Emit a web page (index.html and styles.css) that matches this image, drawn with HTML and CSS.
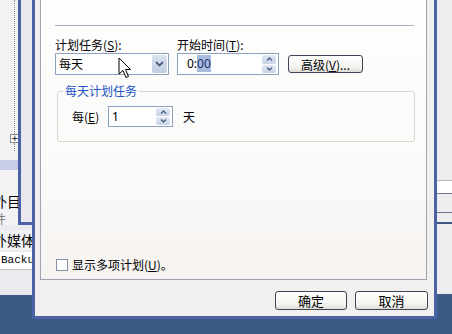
FILE: index.html
```html
<!DOCTYPE html>
<html lang="zh-CN">
<head>
  <meta charset="UTF-8" />
  <title>计划任务</title>
  <link rel="stylesheet" href="styles.css">
</head>
<body>
  <div class="desk">
    <div class="bg-left">
      <div class="bg-top">
        <div class="tree">
          <div class="tree-line"></div>
          <div class="tree-plus">+</div>
          <div class="tree-line stub"></div>
          <div class="tree-sel"></div>
          <div class="tree-item">外目</div>
          <div class="tree-item dim">件</div>
        </div>
        <div class="bg-win"></div>
      </div>
      <div class="bg-row">外媒体项</div>
      <div class="bg-row mono">Backup</div>
    </div>

    <div class="dialog">
      <div class="page">
        <div class="sep"></div>
        <div class="fields">
          <div class="field task">
            <label>计划任务(<u>S</u>):</label>
            <div class="combo">
              <span class="combo-text">每天</span>
              <span class="combo-btn">
                <svg width="9" height="6" viewBox="0 0 9 6"><path d="M1 1 L4.5 4.5 L8 1" fill="none" stroke="#4a5f86" stroke-width="1.8"/></svg>
              </span>
            </div>
          </div>
          <div class="field time">
            <label>开始时间(<u>T</u>):</label>
            <div class="spin">
              <span class="spin-text">0:<span class="sel">00</span></span>
              <span class="spin-btns">
                <span><svg width="7" height="4" viewBox="0 0 7 4"><path d="M1 3.5 L3.5 1 L6 3.5" fill="none" stroke="#4a5f86" stroke-width="1.4"/></svg></span>
                <span><svg width="7" height="4" viewBox="0 0 7 4"><path d="M1 0.5 L3.5 3 L6 0.5" fill="none" stroke="#4a5f86" stroke-width="1.4"/></svg></span>
              </span>
            </div>
          </div>
          <button class="btn adv">高级(<u>V</u>)...</button>
        </div>

        <fieldset class="group">
          <legend>每天计划任务</legend>
          <div class="every">
            <span class="every-label">每(<u>E</u>)</span>
            <div class="spin small">
              <span class="spin-text">1</span>
              <span class="spin-btns">
                <span><svg width="7" height="4" viewBox="0 0 7 4"><path d="M1 3.5 L3.5 1 L6 3.5" fill="none" stroke="#4a5f86" stroke-width="1.4"/></svg></span>
                <span><svg width="7" height="4" viewBox="0 0 7 4"><path d="M1 0.5 L3.5 3 L6 0.5" fill="none" stroke="#4a5f86" stroke-width="1.4"/></svg></span>
              </span>
            </div>
            <span class="unit">天</span>
          </div>
        </fieldset>

        <label class="check"><span class="box"></span>显示多项计划(<u>U</u>)。</label>
      </div>
      <div class="actions">
        <button class="btn ok">确定</button>
        <button class="btn cancel">取消</button>
      </div>
    </div>

    <div class="bg-right">
      <div class="r-top"></div>
      <div class="r-row"></div>
      <div class="r-mid"></div>
      <div class="r-row2"></div>
      <div class="r-rest"></div>
    </div>
  </div>

  <!-- mouse pointer over the combo -->
  <svg class="cursor" width="15" height="23" viewBox="0 0 15 23">
    <path d="M1 1 L1 17 L5 13.5 L8 20.5 L10.5 19.5 L7.5 12.5 L12.5 12.5 Z" fill="#fff" stroke="#000" stroke-width="1" stroke-linejoin="round"/>
  </svg>
</body>
</html>
```

FILE: styles.css
```css
body {
  margin: 0;
  width: 452px;
  height: 334px;
  overflow: hidden;
  position: relative;
  background: #3b5a86;
  font-family: "Noto Sans CJK SC", "Noto Sans", sans-serif;
  font-size: 12px;
  color: #000;
}
u {
  text-underline-offset: 1px;
}
.desk {
  display: flex;
  align-items: flex-start;
}

/* background window on the left */
.bg-left {
  width: 32px;
  height: 295px;
  background: #ebebef;
  display: flex;
  flex-direction: column;
  overflow: hidden;
}
.bg-top {
  display: flex;
  height: 225px;
  flex-shrink: 0;
}
.tree {
  width: 18px;
  background: #f3f3f6;
  display: flex;
  flex-direction: column;
  overflow: hidden;
}
.tree-line {
  height: 136px;
  margin-left: 14px;
  border-left: 1px dotted #8c8c8c;
}
.tree-line.stub {
  height: 8px;
}
.tree-plus {
  width: 7px;
  height: 7px;
  margin-left: 10px;
  border: 1px solid #8c8c8c;
  background: #fff;
  font: 9px/7px "DejaVu Sans", sans-serif;
  text-align: center;
  color: #000;
}
.tree-sel {
  height: 10px;
  margin-top: 9px;
  background: #c9cce6;
}
.tree-item {
  margin-top: 23px;
  margin-left: -7px;
  font-size: 14px;
  line-height: 16px;
  height: 16px;
  white-space: nowrap;
}
.tree-item.dim {
  margin-top: 3px;
  font-size: 12px;
  line-height: 13px;
  height: 13px;
  margin-left: -6px;
  color: #777;
}
.bg-win {
  width: 11px;
  background: #eae8ee;
  border-left: 3px solid #4b62a4;
  border-bottom: 3px solid #4b62a4;
}
.bg-row {
  height: 20px;
  margin-top: 5px;
  font-size: 14px;
  line-height: 20px;
  white-space: nowrap;
  text-indent: -7px;
  background: #f1f1f3;
}
.bg-row.mono {
  margin-top: 2px;
  height: 17px;
  text-indent: 1px;
  font-family: "Liberation Mono", monospace;
  font-size: 11px;
  line-height: 17px;
  background: #fff;
  border-bottom: 1px solid #c4c4c8;
}

/* background window on the right */
.bg-right {
  width: 15px;
  height: 294px;
  background: #ededf0;
  display: flex;
  flex-direction: column;
}
.r-top {
  height: 180px;
  border-bottom: 1px solid #b8b8c0;
}
.r-row {
  height: 12px;
  background: #fff;
  border-bottom: 1px solid #70788c;
}
.r-mid {
  height: 18px;
  border-bottom: 1px solid #6a7690;
}
.r-row2 {
  height: 9px;
  border-bottom: 2px solid #3e5684;
}

/* dialog */
.dialog {
  width: 405px;
  height: 319px;
  box-sizing: border-box;
  border: 3px solid #4b62a4;
  border-top: none;
  background: #f2f0ef;
  padding: 0 7px 0 5px;
  display: flex;
  flex-direction: column;
}
.page {
  height: 280px;
  box-sizing: border-box;
  border: 1px solid #9ea5b1;
  border-top: none;
  background: linear-gradient(#fefefe, #fbfaf9 60%, #f6f3f0);
  padding: 0 12px 0 14px;
  display: flex;
  flex-direction: column;
}
.sep {
  margin-top: 25px;
  border-top: 1px solid #a9afbc;
}
.fields {
  display: flex;
  align-items: flex-end;
  margin-top: 11px;
}
.field label {
  display: block;
  height: 15px;
  line-height: 15px;
  margin-bottom: 1px;
  white-space: nowrap;
}
.task {
  width: 114px;
}
.time {
  width: 102px;
  margin-left: 8px;
}
.combo,
.spin {
  height: 22px;
  box-sizing: border-box;
  border: 1px solid #8aa1bf;
  background: #fff;
  display: flex;
  align-items: stretch;
}
.combo-text {
  flex: 1;
  padding-left: 3px;
  line-height: 20px;
}
.combo-btn {
  width: 15px;
  margin: 1px;
  border-radius: 2px;
  background: linear-gradient(#dbe2f0, #c2cde2);
  display: flex;
  align-items: center;
  justify-content: center;
}
.spin-text {
  flex: 1;
  padding-left: 9px;
  line-height: 20px;
  font-family: "Noto Sans", sans-serif;
}
.sel {
  background: #a9bbdd;
  color: #1b2d6e;
}
.spin-btns {
  width: 14px;
  margin: 1px 2px 1px 0;
  display: flex;
  flex-direction: column;
  gap: 1px;
}
.spin-btns span {
  flex: 1;
  border-radius: 2px;
  background: linear-gradient(#e2e8f4, #c9d3e6);
  display: flex;
  align-items: center;
  justify-content: center;
}
.btn {
  box-sizing: border-box;
  padding: 0;
  border: 1px solid #3d4657;
  border-radius: 3px;
  background: linear-gradient(#ffffff, #f3f3f0 70%, #dedcd6);
  font-family: "Noto Sans CJK SC", "Noto Sans", sans-serif;
  font-size: 12px;
  color: #000;
}
.adv {
  width: 75px;
  height: 18px;
  margin: 0 0 2px 9px;
  line-height: 15px;
}

/* group box */
.group {
  width: 358px;
  box-sizing: border-box;
  margin: 8px 0 0 2px;
  padding: 0 5px 14px 5px;
  border: 1px solid #d6d6cf;
  border-radius: 3px;
}
.group legend {
  padding: 0 2px;
  line-height: 16px;
  color: #2353c6;
}
.every {
  display: flex;
  align-items: center;
  margin: 7px 0 0 9px;
}
.every-label {
  width: 36px;
}
.spin.small {
  width: 65px;
  height: 21px;
}
.spin.small .spin-text {
  padding-left: 3px;
  line-height: 19px;
}
.unit {
  margin-left: 10px;
}

/* checkbox */
.check {
  margin-top: auto;
  margin-bottom: 8px;
  display: flex;
  align-items: center;
  height: 13px;
  white-space: nowrap;
}
.box {
  width: 12px;
  height: 12px;
  box-sizing: border-box;
  margin-left: 1px;
  margin-right: 4px;
  border: 1px solid #8290a8;
  background: #fff;
}

/* bottom buttons */
.actions {
  display: flex;
  justify-content: flex-end;
  gap: 8px;
  margin: 11px -1px 0 0;
}
.actions .btn {
  height: 19px;
  font-size: 13px;
  line-height: 16px;
}
.ok {
  width: 72px;
}
.cancel {
  width: 73px;
}

.cursor {
  position: absolute;
  left: 118px;
  top: 57px;
}
```
